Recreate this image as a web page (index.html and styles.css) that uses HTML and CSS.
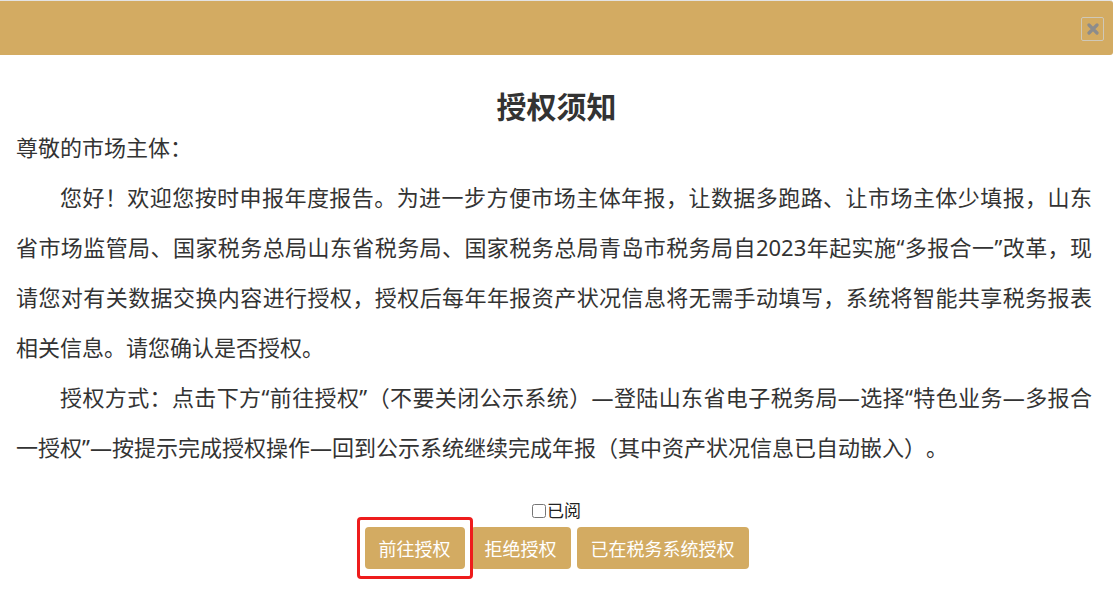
FILE: index.html
```html
<!DOCTYPE html>
<html lang="zh-CN">
<head>
<meta charset="utf-8">
<title>授权须知</title>
<link rel="stylesheet" href="styles.css">
</head>
<body>
<div class="dialog">
  <div class="dialog-head">
    <span class="close-btn" aria-label="关闭">
      <svg width="12" height="12" viewBox="0 0 12 12"><path d="M2 2 L10 10 M10 2 L2 10" stroke="#8c8c8c" stroke-width="3.2" stroke-linecap="round"/></svg>
    </span>
  </div>
  <div class="dialog-body">
    <h1 class="title">授权须知</h1>
    <p class="greet">尊敬的市场主体：</p>
    <p class="para">您好！欢迎您按时申报年度报告。为进一步方便市场主体年报，让数据多跑路、让市场主体少填报，山东省市场监管局、国家税务总局山东省税务局、国家税务总局青岛市税务局自2023年起实施“多报合一”改革，现请您对有关数据交换内容进行授权，授权后每年年报资产状况信息将无需手动填写，系统将智能共享税务报表相关信息。请您确认是否授权。</p>
    <p class="para">授权方式：点击下方“前往授权”（不要关闭公示系统）—登陆山东省电子税务局—选择“特色业务—多报合一授权”—按提示完成授权操作—回到公示系统继续完成年报（其中资产状况信息已自动嵌入）。</p>
    <div class="read-line"><label class="read"><input type="checkbox" class="chk">已阅</label></div>
    <div class="actions">
      <button class="btn">前往授权</button>
      <button class="btn">拒绝授权</button>
      <button class="btn">已在税务系统授权</button>
      <span class="mark"></span>
    </div>
  </div>
</div>
</body>
</html>
```
FILE: styles.css
```css
html, body {
  margin: 0;
  padding: 0;
  background: #ffffff;
}
body {
  font-family: "Microsoft YaHei", "Noto Sans", "Noto Sans CJK SC", sans-serif;
  color: #333333;
  text-spacing-trim: space-all;
}
.dialog {
  width: 1113px;
  background: #ffffff;
}
.dialog-head {
  height: 54px;
  border-top: 1px solid #e3e3e3;
  background: #d3ab62;
  border-radius: 0 3px 3px 0;
  display: flex;
  align-items: center;
  justify-content: flex-end;
  padding-right: 9px;
}
.close-btn {
  width: 21px;
  height: 22px;
  border: 1px solid #cfc8b8;
  border-radius: 2px;
  display: flex;
  align-items: center;
  justify-content: center;
  margin-top: 2px;
}
.dialog-body {
  padding: 37px 16px 40px 16px;
}
.title {
  margin: 0;
  font-size: 30px;
  line-height: 30px;
  font-weight: bold;
  text-align: center;
  color: #333333;
}
.greet, .para {
  margin: 0 5px 0 0;
  font-size: 22px;
  line-height: 50px;
  text-align: justify;
}
.para {
  text-indent: 2em;
}
.read-line {
  margin-top: 29px;
  text-align: center;
  font-size: 17px;
  line-height: 20px;
  color: #222222;
}
.read {
  display: inline-flex;
  align-items: center;
}
.chk {
  margin: 0 1px 0 0;
  width: 14px;
  height: 14px;
}
.actions {
  position: relative;
  margin-top: 5px;
  display: flex;
  justify-content: center;
  gap: 6px;
}
.btn {
  height: 42px;
  padding: 0 14px;
  border: none;
  border-radius: 4px;
  background: #d3ab62;
  color: #ffffff;
  font-family: "Microsoft YaHei", "Noto Sans CJK SC", sans-serif;
  font-size: 18px;
}
.mark {
  position: absolute;
  left: 341px;
  top: -10px;
  width: 110px;
  height: 56px;
  border: 3px solid #ee1c1c;
  border-radius: 4px;
}
```
